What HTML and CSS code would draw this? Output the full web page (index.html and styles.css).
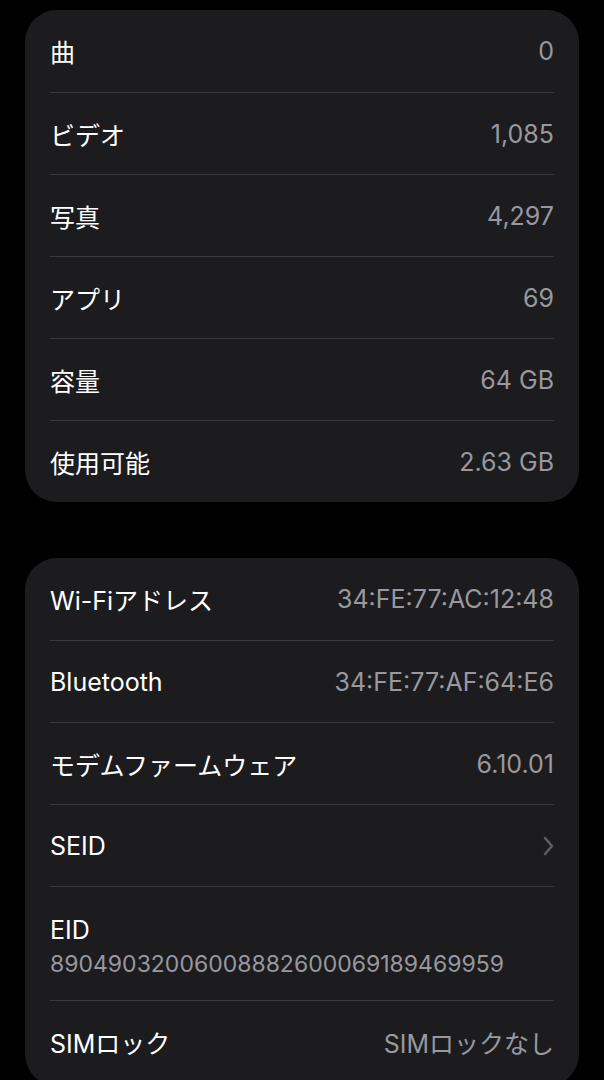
FILE: index.html
```html
<!DOCTYPE html>
<html lang="ja">
<head>
    <meta charset="UTF-8">
    <meta name="viewport" content="width=device-width, initial-scale=1.0">
    <title>情報</title>
    <link rel="stylesheet" href="styles.css">
</head>

<body>
    <section class="grupo">
        <div class="fila"><span class="nombre">曲</span><span class="valor">0</span></div>
        <div class="fila"><span class="nombre">ビデオ</span><span class="valor">1,085</span></div>
        <div class="fila"><span class="nombre">写真</span><span class="valor">4,297</span></div>
        <div class="fila"><span class="nombre">アプリ</span><span class="valor">69</span></div>
        <div class="fila"><span class="nombre">容量</span><span class="valor">64 GB</span></div>
        <div class="fila"><span class="nombre">使用可能</span><span class="valor">2.63 GB</span></div>
    </section>

    <section class="grupo segundo">
        <div class="fila"><span class="nombre">Wi-Fiアドレス</span><span class="valor">34:FE:77:AC:12:48</span></div>
        <div class="fila"><span class="nombre">Bluetooth</span><span class="valor">34:FE:77:AF:64:E6</span></div>
        <div class="fila"><span class="nombre">モデムファームウェア</span><span class="valor">6.10.01</span></div>
        <div class="fila">
            <span class="nombre">SEID</span>
            <svg class="flecha" width="12" height="22" viewBox="0 0 12 22">
                <path d="M3 3 L10 11 L3 19" fill="none" stroke="#5c5c61" stroke-width="2.6" stroke-linecap="round" stroke-linejoin="round"/>
            </svg>
        </div>
        <div class="fila doble">
            <span class="nombre">EID</span>
            <span class="numero">89049032006008882600069189469959</span>
        </div>
        <div class="fila"><span class="nombre">SIMロック</span><span class="valor">SIMロックなし</span></div>
    </section>
</body>
</html>
```

FILE: styles.css
```css
html, body {
    overflow: hidden;
}

body {
    font-family: Inter, "Noto Sans CJK JP", sans-serif;
    background-color: #000;
    color: #fff;
    margin: 0;
    padding: 10px 25px 0;
}

.grupo {
    background-color: #1c1c1e;
    border-radius: 32px;
    padding: 0 25px;
}

.segundo {
    margin-top: 56px;
    padding-bottom: 4px;
}

.fila {
    box-sizing: border-box;
    height: 82px;
    display: flex;
    justify-content: space-between;
    align-items: center;
    border-top: 1px solid #3a3a3d;
}

.fila:first-child {
    border-top: none;
}

.nombre {
    font-size: 25px;
}

.valor {
    font-size: 25px;
    color: #98989e;
}

.doble {
    height: 114px;
    padding-top: 6px;
    flex-direction: column;
    justify-content: center;
    align-items: flex-start;
    gap: 5px;
}

.numero {
    font-size: 23px;
    color: #98989e;
}
```
